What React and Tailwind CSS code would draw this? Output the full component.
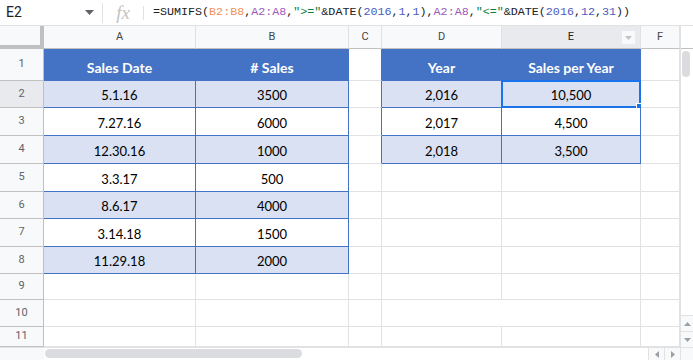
import React from 'react';

// column widths in px: row header, A..F
const cols = [
  { key: 'A', w: 'w-[152px]' },
  { key: 'B', w: 'w-[153px]' },
  { key: 'C', w: 'w-[33px]' },
  { key: 'D', w: 'w-[120px]' },
  { key: 'E', w: 'w-[139px]' },
  { key: 'F', w: 'w-[39px]' },
];

const rowHeights = ['h-[32px]', 'h-[27px]', 'h-[28px]', 'h-[28px]', 'h-[28px]', 'h-[27px]', 'h-[28px]', 'h-[27px]', 'h-[26px]', 'h-[27px]', 'h-[20px]'];

const sales = [
  ['5.1.16', '3500'],
  ['7.27.16', '6000'],
  ['12.30.16', '1000'],
  ['3.3.17', '500'],
  ['8.6.17', '4000'],
  ['3.14.18', '1500'],
  ['11.29.18', '2000'],
];

const years = [
  ['2,016', '10,500'],
  ['2,017', '4,500'],
  ['2,018', '3,500'],
];

const cellFont = { fontFamily: 'Lato, "Open Sans", sans-serif' };

function Cell({ w, children, blue, header, band, rightBlue, bottomBlue, selected }) {
  let bg = 'bg-white';
  if (header) bg = 'bg-[#4472c4]';
  else if (band) bg = 'bg-[#d9e1f2]';
  return (
    <div
      className={`relative box-border shrink-0 h-full border-r border-b flex items-end justify-center pb-[3px] ${w} ${bg} ${
        rightBlue || blue ? 'border-r-[#4472c4]' : 'border-r-[#e2e2e2]'
      } ${bottomBlue || blue ? 'border-b-[#4472c4]' : 'border-b-[#e2e2e2]'} ${
        header ? 'text-white font-bold text-[14px]' : 'text-black text-[13px]'
      }`}
      style={cellFont}
    >
      <span className="leading-[18px] whitespace-nowrap">{children}</span>
      {selected && (
        <div className="absolute -left-[1px] -top-[1px] -right-[1px] -bottom-[1px] border-2 border-[#1a73e8]">
          <div className="absolute -right-[4px] -bottom-[4px] w-[7px] h-[7px] bg-[#1a73e8] border border-white" />
        </div>
      )}
    </div>
  );
}

function Row({ n, h }) {
  // n: 1-based row index
  const inLeft = n <= 8;
  const inRight = n <= 4;
  const leftHeader = n === 1;
  const band = n % 2 === 0;
  const s = sales[n - 2];
  const y = years[n - 2];
  return (
    <div className={`flex ${h}`}>
      <div
        className={`box-border shrink-0 w-[44px] h-full border-r-[1px] border-b flex items-center justify-center text-[11px] text-[#5f6368] ${
          n === 2 ? 'bg-[#e8eaed] border-r-[#c0c0c0] border-b-[#c0c0c0]' : 'bg-[#f8f9fa] border-r-[#c0c0c0] border-b-[#c0c0c0]'
        }`}
        style={{ fontFamily: 'Roboto, Arial, sans-serif' }}
      >
        {n}
      </div>
      {/* A, B */}
      {inLeft ? (
        <>
          <Cell w="w-[152px]" blue header={leftHeader} band={!leftHeader && band}>
            {leftHeader ? 'Sales Date' : s[0]}
          </Cell>
          <Cell w="w-[153px]" blue header={leftHeader} band={!leftHeader && band}>
            {leftHeader ? '# Sales' : s[1]}
          </Cell>
        </>
      ) : (
        <>
          <Cell w="w-[152px]" />
          <Cell w="w-[153px]" />
        </>
      )}
      {/* C */}
      <Cell w="w-[33px]" rightBlue={inRight} />
      {/* D, E */}
      {inRight ? (
        <>
          <Cell w="w-[120px]" blue header={n === 1} band={n !== 1 && band}>
            {n === 1 ? 'Year' : y[0]}
          </Cell>
          <Cell w="w-[139px]" blue header={n === 1} band={n !== 1 && band} selected={n === 2}>
            {n === 1 ? 'Sales per Year' : y[1]}
          </Cell>
        </>
      ) : n === 10 ? (
        <Cell w="w-[259px]" />
      ) : (
        <>
          <Cell w="w-[120px]" />
          <Cell w="w-[139px]" />
        </>
      )}
      {/* F */}
      <Cell w="w-[39px]" />
    </div>
  );
}

function FormulaBar() {
  const mono = { fontFamily: '"Liberation Mono", "DejaVu Sans Mono", monospace' };
  return (
    <div className="h-[26px] flex items-center border-b border-[#e2e2e2] bg-white">
      <div className="w-[102px] h-full flex items-center justify-between pl-[6px] pr-[8px]" style={{ fontFamily: 'Roboto, Arial, sans-serif' }}>
        <span className="text-[14px] text-[#202124]">E2</span>
        <svg width="9" height="5" viewBox="0 0 9 5">
          <path d="M0 0 L9 0 L4.5 5 Z" fill="#5f6368" />
        </svg>
      </div>
      <div className="w-px h-[20px] bg-[#e2e2e2]" />
      <div className="w-[40px] flex items-center justify-center">
        <span className="text-[19px] italic text-[#c4c4c4] leading-none" style={{ fontFamily: '"Liberation Serif", serif' }}>fx</span>
      </div>
      <div className="w-px h-[14px] bg-[#e2e2e2]" />
      <div className="pl-[9px] text-[11.7px] text-[#202124] whitespace-nowrap" style={mono}>
        =SUMIFS(<span className="text-[#f0925a]">B2:B8</span>,<span className="text-[#9c5ab8]">A2:A8</span>,
        <span className="text-[#0b8043]">"&gt;="</span>&amp;DATE(<span className="text-[#4a5bbf]">2016</span>,
        <span className="text-[#4a5bbf]">1</span>,<span className="text-[#4a5bbf]">1</span>),
        <span className="text-[#9c5ab8]">A2:A8</span>,<span className="text-[#0b8043]">"&lt;="</span>&amp;DATE(
        <span className="text-[#4a5bbf]">2016</span>,<span className="text-[#4a5bbf]">12</span>,
        <span className="text-[#4a5bbf]">31</span>))
      </div>
    </div>
  );
}

function ColumnHeaders() {
  return (
    <div className="flex h-[23px]" style={{ fontFamily: 'Roboto, Arial, sans-serif' }}>
      <div className="box-border shrink-0 w-[44px] h-full bg-[#f8f9fa] border-r-[4px] border-b-[4px] border-[#c0c0c0]" />
      {cols.map((c) => (
        <div
          key={c.key}
          className={`relative box-border shrink-0 h-full ${c.w} border-r border-b border-[#c0c0c0] border-r-[#e2e2e2] flex items-center justify-center text-[11px] ${
            c.key === 'E' ? 'bg-[#e8eaed] text-[#202124]' : 'bg-[#f8f9fa] text-[#444]'
          }`}
        >
          {c.key}
          {c.key === 'E' && (
            <div className="absolute right-[5px] top-[5px] w-[13px] h-[13px] bg-[#f8f9fa] flex items-center justify-center">
              <svg width="7" height="4" viewBox="0 0 7 4">
                <path d="M0 0 L7 0 L3.5 4 Z" fill="#c4c4c4" />
              </svg>
            </div>
          )}
        </div>
      ))}
    </div>
  );
}

function VScroll() {
  return (
    <div className="w-[13px] flex flex-col border-l border-[#e2e2e2] bg-white">
      <div className="h-[23px] border-b border-[#c0c0c0] bg-white" />
      <div className="flex-1 relative">
        <div className="absolute left-[1px] top-[2px] w-[8px] h-[26px] rounded-full bg-[#dadce0]" />
      </div>
      <div className="h-[16px] flex items-center justify-center border-t border-[#e2e2e2] bg-[#f8f9fa]">
        <svg width="7" height="4" viewBox="0 0 7 4"><path d="M0 4 L7 4 L3.5 0 Z" fill="#9aa0a6" /></svg>
      </div>
      <div className="h-[16px] flex items-center justify-center border-t border-[#e2e2e2] bg-[#f8f9fa]">
        <svg width="7" height="4" viewBox="0 0 7 4"><path d="M0 0 L7 0 L3.5 4 Z" fill="#9aa0a6" /></svg>
      </div>
    </div>
  );
}

function HScroll() {
  return (
    <div className="h-[13px] flex border-t border-[#e2e2e2] bg-white">
      <div className="w-[44px] bg-[#f8f9fa]" />
      <div className="flex-1 relative">
        <div className="absolute left-[1px] top-[1px] w-[257px] h-[9px] rounded-full bg-[#dadce0]" />
      </div>
      <div className="w-[16px] flex items-center justify-center border-l border-[#e2e2e2] bg-[#f8f9fa]">
        <svg width="4" height="7" viewBox="0 0 4 7"><path d="M4 0 L4 7 L0 3.5 Z" fill="#9aa0a6" /></svg>
      </div>
      <div className="w-[16px] flex items-center justify-center border-l border-[#e2e2e2] bg-[#f8f9fa]">
        <svg width="4" height="7" viewBox="0 0 4 7"><path d="M0 0 L0 7 L4 3.5 Z" fill="#9aa0a6" /></svg>
      </div>
      <div className="w-[13px] border-l border-[#e2e2e2] bg-[#f8f9fa]" />
    </div>
  );
}

export default function App() {
  return (
    <div className="w-[693px] h-[360px] overflow-hidden bg-white flex flex-col">
      <FormulaBar />
      <div className="flex h-[321px]">
        <div className="w-[680px] flex flex-col overflow-hidden">
          <ColumnHeaders />
          {rowHeights.map((h, i) => (
            <Row key={i} n={i + 1} h={h} />
          ))}
        </div>
        <VScroll />
      </div>
      <HScroll />
    </div>
  );
}
